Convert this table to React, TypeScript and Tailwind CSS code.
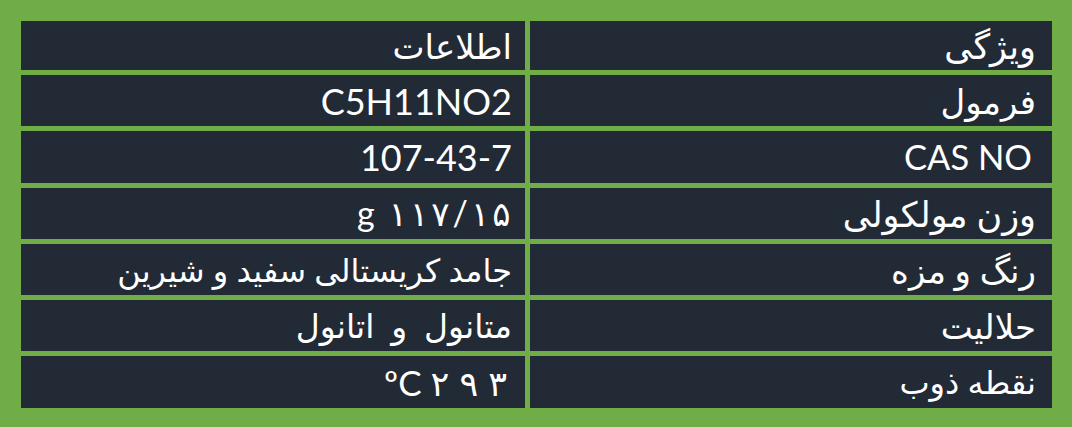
import React from "react";

type Row = { label: string; value: React.ReactNode; labelCls: string; valueCls: string };

// Chrome drops letter-spacing on Arabic runs, so spread digits with padding instead
const spread = (text: string, cls: string) =>
  Array.from(text).map((ch, i) => (
    <span key={i} className={cls}>
      {ch}
    </span>
  ));

const rows: Row[] = [
  { label: "ویژگی", value: "اطلاعات", labelCls: "text-[35px]", valueCls: "text-[34px]" },
  { label: "فرمول", value: "C5H11NO2", labelCls: "text-[34px]", valueCls: "text-[36px]" },
  { label: "CAS NO", value: "107-43-7", labelCls: "text-[34.5px] pr-[4px]", valueCls: "text-[36px]" },
  {
    label: "وزن مولکولی",
    value: (
      <>
        {spread("۱۱۷/۱۵", "px-[1.5px]")}
        {" "}
        <span className="pr-[4px]">g</span>
      </>
    ),
    labelCls: "text-[35px]",
    valueCls: "text-[34px]",
  },
  { label: "رنگ و مزه", value: "جامد کریستالی سفید و شیرین", labelCls: "text-[34px]", valueCls: "text-[32px]" },
  { label: "حلالیت", value: "متانول  و  اتانول", labelCls: "text-[34px]", valueCls: "text-[33px] whitespace-pre" },
  {
    label: "نقطه ذوب",
    value: (
      <>
        <span className="pr-[4px]">ºC</span>
        {spread("۲۹۳", "px-[5px]")}
      </>
    ),
    labelCls: "text-[32px]",
    valueCls: "text-[35px]",
  },
];

const App = () => {
  return (
    <div className="w-[1072px] h-[427px] bg-[#70ad47] pt-[21px] pl-[21px]">
      <div
        dir="rtl"
        className="grid grid-cols-[522px_504px] gap-[5px] w-[1031px] text-white font-['Lato','DejaVu_Sans',sans-serif]"
      >
        {rows.map((row, i) => (
          <React.Fragment key={i}>
            <div
              className={`bg-[#222a35] flex items-center pr-[16px] leading-none ${
                i === 0 ? "h-[49px]" : "h-[51.3px]"
              }`}
            >
              <span className={row.labelCls}>{row.label}</span>
            </div>
            <div
              className={`bg-[#222a35] flex items-center pr-[13px] leading-none ${
                i === 0 ? "h-[49px]" : "h-[51.3px]"
              }`}
            >
              <span className={row.valueCls}>{row.value}</span>
            </div>
          </React.Fragment>
        ))}
      </div>
    </div>
  );
};

export default App;
